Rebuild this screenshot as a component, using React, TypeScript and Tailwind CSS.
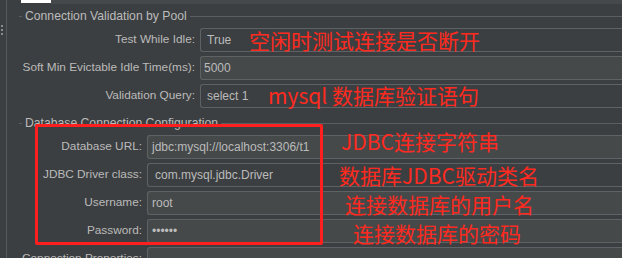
import React from "react";

const font = { fontFamily: '"Liberation Sans", Arial, sans-serif' };

function Field({ value, light, pad = "pl-[5px]" }: { value: string; light?: boolean; pad?: string }) {
  return (
    <div
      className={`flex-1 h-[24px] border border-[#5e6264] rounded-l-[3px] border-r-0 flex items-center ${pad} text-[12px] text-[#bbbbbb] ${light ? "bg-[#45494a]" : "bg-[#3c3f41]"}`}
    >
      {value}
    </div>
  );
}

function Row({ label, value, light, labelW, pad }: { label: string; value: string; light?: boolean; labelW: string; pad?: string }) {
  return (
    <div className="flex items-center h-[24px]">
      <div className={`${labelW} shrink-0 text-right text-[11.8px] text-[#bbbbbb] pr-[5px] whitespace-nowrap`}>{label}</div>
      <Field value={value} light={light} pad={pad} />
    </div>
  );
}

function Section({ title }: { title: string }) {
  return (
    <div className="flex items-center h-[14px]">
      <div className="w-[3px] h-px bg-[#5b5f61] ml-[12px]" />
      <div className="px-[3px] text-[12.2px] text-[#bbbbbb] leading-none">{title}</div>
      <div className="flex-1 h-px bg-[#5b5f61]" />
    </div>
  );
}

export default function App() {
  return (
    <div className="relative w-[622px] h-[258px] overflow-hidden bg-[#3c3f41] flex" style={font}>
      <div className="w-[7px] shrink-0 border-r border-[#55595b] flex flex-col items-start pt-[25px] pl-[1px] gap-[2px]">
        <div className="w-[2px] h-[2px] bg-[#8a8d8f]" />
        <div className="w-[2px] h-[2px] bg-[#8a8d8f]" />
        <div className="w-[2px] h-[2px] bg-[#8a8d8f]" />
      </div>
      <div className="flex-1 flex flex-col">
        <div className="flex h-[4px] shrink-0">
          <div className="w-[14px]" />
          <div className="w-[30px] h-[3px] bg-white" />
          <div className="flex-1 bg-[#46494b]" />
        </div>
        <div className="mt-[5px]">
          <Section title="Connection Validation by Pool" />
        </div>
        <div className="flex flex-col gap-[4px] mt-[5px]">
          <Row label="Test While Idle:" value="True" labelW="w-[193px]" pad="pl-[6px]" />
          <Row label="Soft Min Evictable Idle Time(ms):" value="5000" light labelW="w-[193px]" pad="pl-[3px]" />
          <Row label="Validation Query:" value="select 1" labelW="w-[193px]" pad="pl-[6px]" />
        </div>
        <div className="mt-[8px]">
          <Section title="Database Connection Configuration" />
        </div>
        <div className="flex flex-col gap-[4px] mt-[5px]">
          <Row label="Database URL:" value="jdbc:mysql://localhost:3306/t1" light labelW="w-[140px]" pad="pl-[4px]" />
          <Row label="JDBC Driver class:" value="com.mysql.jdbc.Driver" labelW="w-[140px]" pad="pl-[7px]" />
          <Row label="Username:" value="root" light labelW="w-[140px]" pad="pl-[4px]" />
          <Row label="Password:" value="••••••" light labelW="w-[140px]" pad="pl-[4px]" />
          <Row label="Connection Properties:" value="" light labelW="w-[140px]" />
        </div>
      </div>

      <div className="absolute left-[35px] top-[124px] w-[288px] h-[121px] border-[3px] border-[#ff1f1f] rounded-[2px]" />
      <div className="absolute inset-0 text-[21px] text-[#ff2a1f] leading-none" style={{ fontFamily: '"Noto Sans CJK SC", sans-serif' }}>
        <div className="absolute left-[249px] top-[30px]">空闲时测试连接是否断开</div>
        <div className="absolute left-[268px] top-[85px]">mysql 数据库验证语句</div>
        <div className="absolute left-[341px] top-[131px]">JDBC连接字符串</div>
        <div className="absolute left-[339px] top-[165px]">数据库JDBC驱动类名</div>
        <div className="absolute left-[345px] top-[194px]">连接数据库的用户名</div>
        <div className="absolute left-[353px] top-[223px]">连接数据库的密码</div>
      </div>
    </div>
  );
}
